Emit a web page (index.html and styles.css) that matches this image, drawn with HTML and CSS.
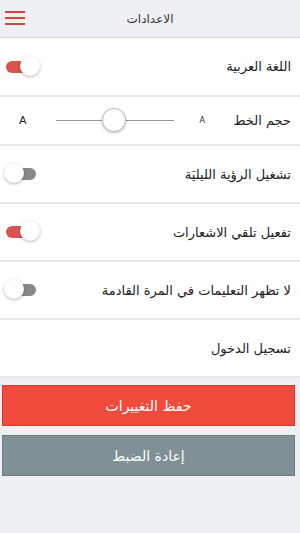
FILE: index.html
```html
<!DOCTYPE html>
<html lang="ar" dir="rtl">
<head>
    <meta charset="UTF-8">
    <meta name="viewport" content="width=device-width, initial-scale=1.0">
    <title>الاعدادات</title>
    <link rel="stylesheet" href="styles.css">
</head>
<body>
    <header class="topbar">
        <span class="title">الاعدادات</span>
        <button class="menu" title="القائمة">
            <span></span><span></span><span></span>
        </button>
    </header>

    <div class="settings">
        <div class="row row-first">
            <span class="label">اللغة العربية</span>
            <span class="toggle on"></span>
        </div>
        <div class="row row-slider">
            <span class="label">حجم الخط</span>
            <div class="font-size">
                <span class="small-a">A</span>
                <div class="slider"><span class="knob"></span></div>
                <span class="big-a">A</span>
            </div>
        </div>
        <div class="row">
            <span class="label">تشغيل الرؤية الليليَة</span>
            <span class="toggle"></span>
        </div>
        <div class="row">
            <span class="label">تفعيل تلقي الاشعارات</span>
            <span class="toggle on"></span>
        </div>
        <div class="row">
            <span class="label">لا تظهر التعليمات في المرة القادمة</span>
            <span class="toggle"></span>
        </div>
        <div class="row">
            <span class="label">تسجيل الدخول</span>
        </div>
    </div>

    <div class="actions">
        <button class="btn btn-save">حفظ التغييرات</button>
        <button class="btn btn-reset">إعادة الضبط</button>
    </div>
</body>
</html>
```

FILE: styles.css
```css
body {
    margin: 0;
    background: #eef0f4;
    font-family: "DejaVu Sans", "Noto Sans", sans-serif;
    color: #222;
    height: 533px;
}
.topbar {
    height: 37px;
    display: flex;
    align-items: center;
    justify-content: center;
    position: relative;
    border-bottom: 1px solid #d4d6da;
    background: #eef0f4;
}
.title { font-size: 12px; color: #333; }
.menu {
    position: absolute;
    left: 5px;
    top: 11px;
    width: 20px;
    height: 16px;
    padding: 0;
    border: none;
    background: none;
    display: flex;
    flex-direction: column;
    gap: 4px;
}
.menu span { display: block; height: 2px; width: 20px; background: #e0403a; }

.settings { display: flex; flex-direction: column; gap: 2px; background: #e5e7eb; padding-bottom: 2px; }
.row {
    height: 56px;
    background: #fff;
    display: flex;
    align-items: center;
    justify-content: space-between;
    padding: 0 9px 0 6px;
}
.row-first { height: 57px; }
.row-slider { height: 47px; }
.label { font-size: 13px; color: #222; }

.toggle {
    width: 30px;
    height: 12px;
    border-radius: 6px;
    background: #888;
    position: relative;
}
.toggle::after {
    content: "";
    position: absolute;
    left: -2px;
    top: -5px;
    width: 20px;
    height: 20px;
    border-radius: 50%;
    background: #fff;
    box-shadow: 0 1px 3px rgba(0, 0, 0, 0.3);
}
.toggle.on { background: #d9534f; width: 26px; }
.toggle.on::after { left: 14px; }

.font-size { display: flex; align-items: center; }
.small-a { font-size: 8px; margin-left: 26px; }
.slider {
    width: 118px;
    height: 1px;
    background: #999;
    position: relative;
    margin-left: 29px;
}
.knob {
    position: absolute;
    left: 46px;
    top: -12px;
    width: 24px;
    height: 24px;
    border-radius: 50%;
    background: #fff;
    border: 1px solid #bbb;
    box-sizing: border-box;
    box-shadow: 0 1px 3px rgba(0, 0, 0, 0.25);
}
.big-a { font-size: 11px; margin-left: 13px; }

.actions { display: flex; flex-direction: column; gap: 9px; padding: 7px 5px 0 2px; }
.btn {
    height: 41px;
    border: 1px solid;
    color: #fff;
    font-family: inherit;
    font-size: 14px;
    font-weight: normal;
}
.btn-save { background: #f04a3c; border-color: #d83a2e; }
.btn-reset { background: #7f9096; border-color: #6c7a80; }
```
